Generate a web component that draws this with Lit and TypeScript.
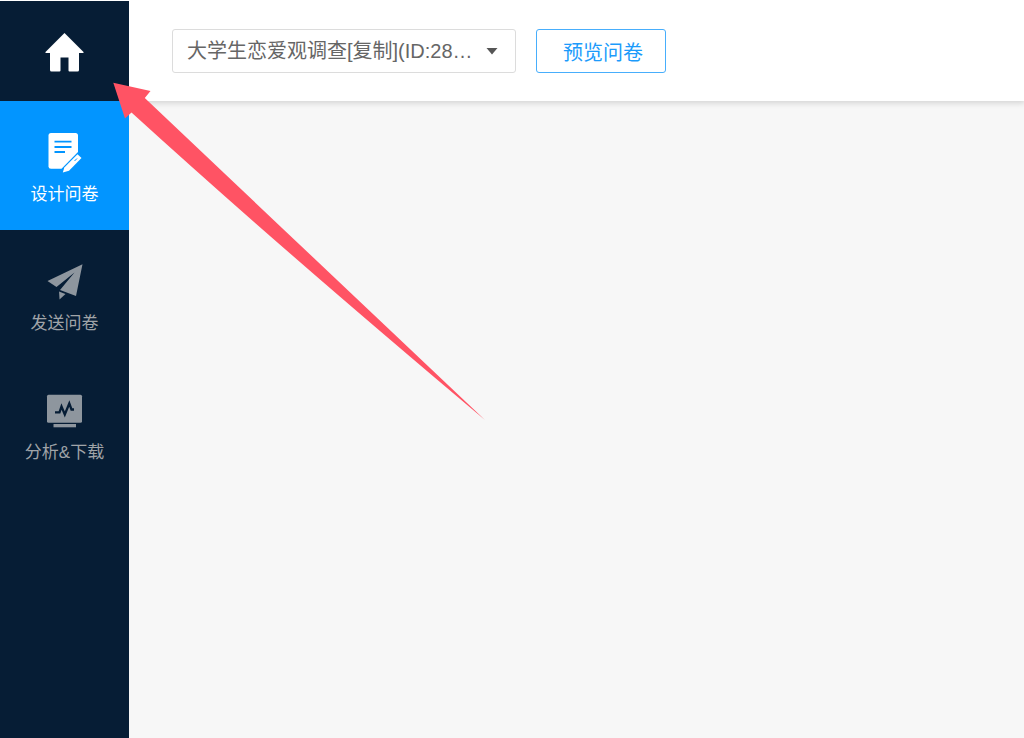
import { LitElement, html, css, svg } from "lit";
import { customElement, property } from "lit/decorators.js";

const homeIcon = svg`<path d="M20 0 L39 19 V20 H34.5 V37 Q34.5 38.5 33 38.5 H25 Q24 38.5 24 37.5 V24.5 H16 V37.5 Q16 38.5 15 38.5 H7 Q5.5 38.5 5.5 37 V20 H1 V19 Z" fill="currentColor"/>`;

const designIcon = svg`
  <path d="M7 1 H31.500 Q34 1 34 3.500 V20 L17.500 36.800 H7 Q4.500 36.800 4.500 34.500 V3.500 Q4.500 1 7 1 Z" fill="currentColor"/>
  <path d="M10.500 9.700 H27.500 M10.500 15 H27.500 M10.500 20 H21" stroke="#0295ff" stroke-width="1.800" fill="none"/>
  <path d="M33.500 22.300 L37.500 26 L25 38.700 L18.800 40.500 L20.300 35.500 Z" fill="currentColor"/>
  <path d="M30.500 29 L33 26.500" stroke="#0295ff" stroke-width="1" fill="none"/>`;

const sendIcon = svg`
  <path d="M38.500 3.300 L32 35 L16 29 L30.500 11.500 L12.500 26 L3.500 20 Z" fill="currentColor"/>
  <path d="M15 30.500 L21.500 33 L15.500 38.500 Z" fill="currentColor"/>`;

const analysisIcon = svg`
  <rect x="3" y="4.700" width="35" height="28" rx="1.500" fill="currentColor"/>
  <rect x="9.500" y="34" width="22.500" height="3.300" fill="currentColor"/>
  <path d="M11 22.300 H15.500 L17.500 16.500 L20.800 24.500 L25.300 13.500 L27.500 19.500 H30" stroke="#061d35" stroke-width="2.300" fill="none"/>`;

@customElement("nav-tab")
class NavTab extends LitElement {
  @property() label = "";
  @property({ attribute: false }) icon: unknown;
  @property({ type: Boolean, reflect: true }) active = false;

  static styles = css`
    :host {
      display: block;
      color: #8e969e;
    }
    :host([active]) {
      color: #fff;
      background: #0295ff;
    }
    .tab {
      display: flex;
      flex-direction: column;
      align-items: center;
      gap: 9px;
      padding: 31px 0 23px;
      color: inherit;
      text-decoration: none;
    }
    .icon {
      display: block;
      width: 41px;
      height: 42px;
    }
    .label {
      font-size: 17px;
      line-height: 24px;
      color: #a0a4a8;
    }
    :host([active]) .label {
      color: #fff;
    }
  `;

  render() {
    return html`<a class="tab" href="#" aria-current=${this.active ? "page" : "false"}>
      <svg class="icon" viewBox="0 0 41 42" aria-hidden="true">${this.icon}</svg>
      <span class="label">${this.label}</span>
    </a>`;
  }
}

@customElement("app-root")
class AppRoot extends LitElement {
  static styles = css`
    :host {
      display: grid;
      grid-template-columns: 129px 1fr;
      min-height: 100vh;
      position: relative;
      overflow: hidden;
      background: #f7f7f7;
      font-family: "Liberation Sans", "Noto Sans CJK SC", sans-serif;
    }
    .sidebar {
      z-index: 1;
      background: #061d35;
      border-top: 1px solid #fff;
    }
    .home {
      display: flex;
      align-items: center;
      justify-content: center;
      box-sizing: border-box;
      height: 100px;
      padding-top: 2px;
      color: #fff;
    }
    .home-icon {
      width: 41px;
      height: 39px;
    }
    .workspace {
      min-width: 0;
    }
    .toolbar {
      display: flex;
      align-items: center;
      gap: 20px;
      height: 101px;
      padding: 0 43px;
      box-sizing: border-box;
      background: #fff;
      box-shadow: 0 1px 6px 1px rgba(0, 0, 0, 0.15);
    }
    .picker {
      display: grid;
      grid-template-columns: 1fr 40px;
      align-items: center;
      width: 344px;
    }
    .picker-select,
    .preview {
      box-sizing: border-box;
      height: 44px;
      font: inherit;
      font-size: 20px;
      border-radius: 3px;
      background: #fff;
    }
    .picker-select {
      grid-area: 1 / 1 / 2 / 3;
      width: 100%;
      padding: 0 40px 0 14px;
      appearance: none;
      color: #666;
      border: 1px solid #dcdcdc;
    }
    .caret {
      grid-area: 1 / 2;
      width: 12px;
      height: 7px;
      margin-left: 10px;
      margin-top: 2px;
      pointer-events: none;
    }
    .preview {
      width: 130px;
      padding: 2px 0 0 4px;
      color: #1c9bfb;
      border: 1px solid #47aefc;
    }
    .pointer {
      position: absolute;
      z-index: 2;
      left: 112px;
      top: 82px;
      width: 374px;
      height: 339px;
      pointer-events: none;
    }
  `;

  render() {
    return html`
      <nav class="sidebar">
        <a class="home" href="#" aria-label="首页">
          <svg class="home-icon" viewBox="0 0 40 39" aria-hidden="true">${homeIcon}</svg>
        </a>
        <nav-tab active label="设计问卷" .icon=${designIcon}></nav-tab>
        <nav-tab label="发送问卷" .icon=${sendIcon}></nav-tab>
        <nav-tab label="分析&下载" .icon=${analysisIcon}></nav-tab>
      </nav>
      <main class="workspace">
        <header class="toolbar">
          <label class="picker">
            <select class="picker-select" aria-label="问卷">
              <option>大学生恋爱观调查[复制](ID:28…</option>
            </select>
            <svg class="caret" viewBox="0 0 12 7" aria-hidden="true">
              <path d="M0.500 0 H11.500 L6 6.500 Z" fill="#555" />
            </svg>
          </label>
          <button class="preview" type="button">预览问卷</button>
        </header>
      </main>
      <svg class="pointer" viewBox="0 0 374 339" aria-hidden="true">
        <path d="M1.300 0.800 L38.500 9 L32.800 16 Q188 163 373 338 Q166 164 19.500 30.500 L13 36.500 Z" fill="#ff5364" />
      </svg>
    `;
  }
}
